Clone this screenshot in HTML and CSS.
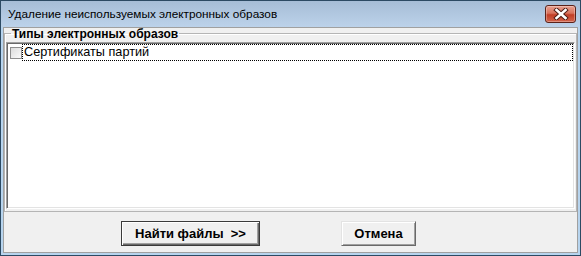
FILE: index.html
```html
<!DOCTYPE html>
<html lang="ru">
<head>
    <meta charset="UTF-8">
    <title>Удаление неиспользуемых электронных образов</title>
    <link rel="stylesheet" href="styles.css">
</head>
<body>
    <div class="okno">
        <div class="zagolovok">
            <span class="zagolovok-tekst">Удаление неиспользуемых электронных образов</span>
            <button class="zakryt" title="Закрыть">
                <svg width="16" height="12" viewBox="0 0 16 12">
                    <path d="M3.5 2 L12.5 10 M12.5 2 L3.5 10" stroke="#4a1a12" stroke-width="4.4" stroke-linecap="square"/>
                    <path d="M3.5 2 L12.5 10 M12.5 2 L3.5 10" stroke="#fff" stroke-width="2.6" stroke-linecap="square"/>
                </svg>
            </button>
        </div>
        <div class="klient">
            <fieldset class="gruppa">
                <legend>Типы электронных образов</legend>
                <div class="spisok">
                    <div class="punkt">
                        <span class="flazhok"></span>
                        <span class="punkt-tekst">Сертификаты партий</span>
                    </div>
                </div>
            </fieldset>
            <div class="knopki">
                <button class="knopka knopka-glavnaya">Найти файлы&nbsp;&nbsp;&gt;&gt;</button>
                <button class="knopka knopka-otmena">Отмена</button>
            </div>
        </div>
    </div>
</body>
</html>
```

FILE: styles.css
```css
body {
    margin: 0;
    padding: 0;
    font-family: "Liberation Sans", Arial, sans-serif;
}

.okno {
    width: 581px;
    height: 256px;
    box-sizing: border-box;
    border: 1px solid #2c4a63;
    background: #b7d4ee;
    display: flex;
    flex-direction: column;
}

.zagolovok {
    height: 26px;
    display: flex;
    align-items: flex-start;
    padding: 0 4px 0 7px;
    background: linear-gradient(#a6bdd6, #bcd2ea);
}

.zagolovok-tekst {
    flex: 1;
    font-size: 11.8px;
    line-height: 26px;
    color: #000;
}

.zakryt {
    width: 31px;
    height: 18px;
    margin-top: 4px;
    padding: 0;
    border: 1px solid #5b2219;
    border-radius: 3px;
    background: linear-gradient(#e8a090 0%, #d8725c 45%, #c13d25 55%, #d2654d 100%);
    box-shadow: inset 0 0 0 1px rgba(255, 255, 255, 0.3);
    display: flex;
    align-items: center;
    justify-content: center;
}

.klient {
    flex: 1;
    margin: 0 2px 2px 2px;
    border: 1px solid #a0a0a0;
    background: #f0f0f0;
    display: flex;
    flex-direction: column;
}

.gruppa {
    margin: 0;
    padding: 0 1px 2px 1px;
    border: 1px solid #b5b5b5;
    box-shadow: inset 1px 1px 0 #fff;
}

.gruppa legend {
    font-size: 12px;
    font-weight: bold;
    line-height: 8px;
    margin-left: 5px;
    padding: 2px 1px 0 1px;
}

.spisok {
    margin-top: 4px;
    height: 167px;
    box-sizing: border-box;
    background: #fff;
    border: 1px solid;
    border-color: #a0a0a0 #fff #fff #a0a0a0;
    box-shadow: inset 1px 1px 0 #696969, inset -1px -1px 0 #e3e3e3;
    padding: 1px 1px 0 2px;
}

.punkt {
    display: flex;
    align-items: center;
    height: 17px;
}

.flazhok {
    width: 12px;
    height: 12px;
    box-sizing: border-box;
    margin: 0 0 0 1px;
    border: 1px solid #8f8f8f;
    background: linear-gradient(135deg, #dcdcdc, #fbfbfb);
}

.punkt-tekst {
    flex: 1;
    height: 17px;
    box-sizing: border-box;
    border: 1px dotted #000;
    padding-left: 1px;
    font-size: 12.7px;
    line-height: 15px;
}

.knopki {
    display: flex;
    gap: 81px;
    padding: 9px 0 0 117px;
}

.knopka {
    height: 25px;
    padding: 0;
    font-family: "Liberation Sans", Arial, sans-serif;
    font-size: 13px;
    font-weight: bold;
    color: #000;
    background: #f0f0f0;
}

.knopka-glavnaya {
    width: 139px;
    border: 1px solid #3a3a3a;
    box-shadow: inset 1px 1px 0 #fff, inset -1px -1px 0 #696969, inset -2px -2px 0 #a0a0a0;
}

.knopka-otmena {
    width: 75px;
    border: 1px solid;
    border-color: #e3e3e3 #696969 #696969 #e3e3e3;
    box-shadow: inset 1px 1px 0 #fff, inset -1px -1px 0 #a0a0a0;
}
```
